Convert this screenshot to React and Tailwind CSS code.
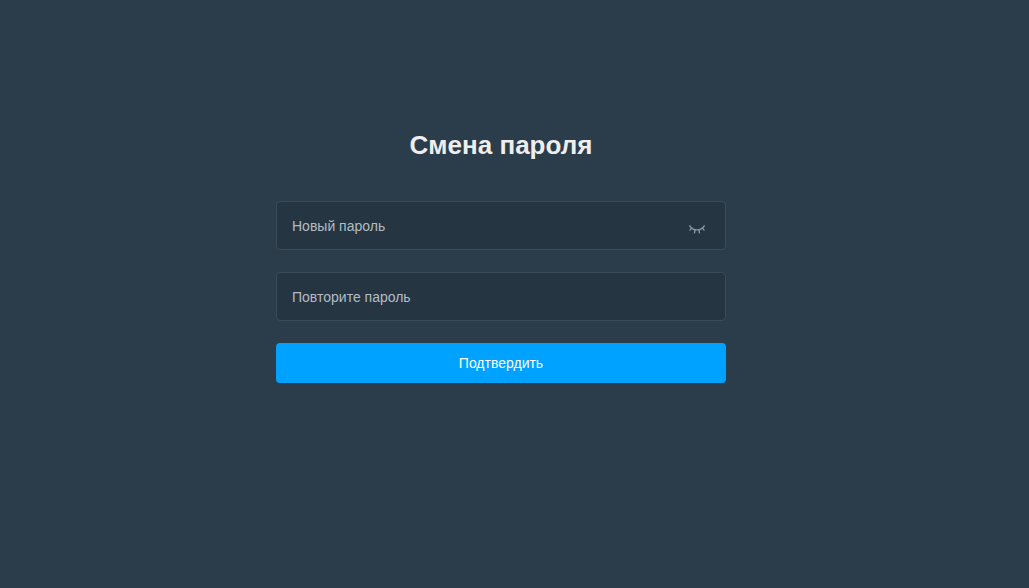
import { useState } from "react";

function EyeClosedIcon() {
  return (
    <svg width="16" height="9" viewBox="0 0 16 9" fill="none" stroke="currentColor" strokeWidth="1.4" strokeLinecap="round" aria-hidden="true">
      <path d="M0.8 0.8C2.3 3.4 4.8 4.9 8 4.9C11.2 4.9 13.7 3.4 15.2 0.8" />
      <path d="M2.7 3.1L0.9 5.1M13.3 3.1L15.1 5.1M6.1 4.9L5.5 7.9M9.9 4.9L10.5 7.9" />
    </svg>
  );
}

const fieldClass =
  "block h-[49px] w-full rounded border border-[#394b58] bg-[#263542] px-[15px] text-sm text-[#eeeeee] placeholder:text-[#b3bcc3] outline-none focus:border-[#00a2ff]";

export default function App() {
  const [visible, setVisible] = useState(false);
  const type = visible ? "text" : "password";

  return (
    <main className="flex min-h-screen items-center justify-center bg-[#2b3c4a] pb-[76px] pr-[27px] font-['Liberation_Sans',Arial,sans-serif]">
      <form className="flex w-full max-w-[450px] flex-col" onSubmit={(e) => e.preventDefault()}>
        <h1 className="mb-10 text-center text-[26px] leading-8 font-bold text-[#eeeeee]">Смена пароля</h1>
        <div className="relative mb-[22px]">
          <input type={type} aria-label="Новый пароль" placeholder="Новый пароль" className={fieldClass} />
          <button
            type="button"
            aria-label="Показать пароль"
            onClick={() => setVisible(!visible)}
            className="absolute inset-y-0 right-[21px] flex items-center pt-[7px] text-[#8b969f]"
          >
            <EyeClosedIcon />
          </button>
        </div>
        <input type={type} aria-label="Повторите пароль" placeholder="Повторите пароль" className={fieldClass} />
        <button type="submit" className="mt-[22px] h-10 w-full rounded bg-[#00a2ff] text-sm text-white">
          Подтвердить
        </button>
      </form>
    </main>
  );
}
